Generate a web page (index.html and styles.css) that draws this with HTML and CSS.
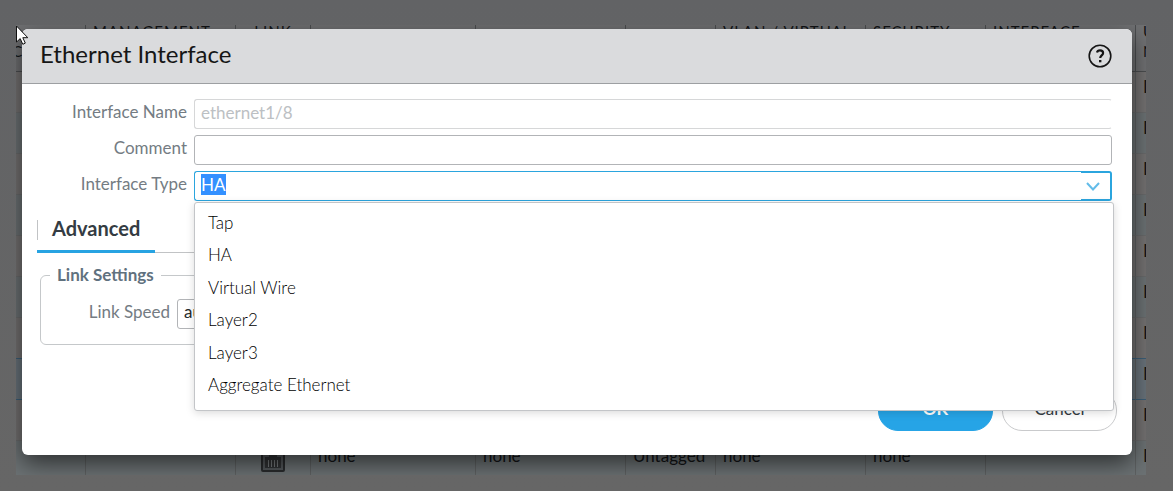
FILE: index.html
```html
<!DOCTYPE html>
<html lang="en">
<head>
<meta charset="utf-8">
<title>Ethernet Interface</title>
<link rel="stylesheet" href="styles.css">
</head>
<body>
<main class="workspace">
  <div class="backdrop" aria-hidden="true">
    <table class="grid">
      <colgroup>
        <col class="c-name"><col class="c-wide"><col class="c-link"><col class="c-ip"><col class="c-wide"><col class="c-tag"><col class="c-wide"><col class="c-zone"><col class="c-wide"><col class="c-wide">
      </colgroup>
      <thead>
        <tr><th class="end">INTERFACE</th><th>MANAGEMENT<br>PROFILE</th><th class="mid">LINK<br>STATE</th><th></th><th></th><th></th><th>VLAN / VIRTUAL<br>WIRE</th><th>SECURITY<br>ZONE</th><th>INTERFACE<br>TYPE</th><th>UPSTREAM<br>NAT</th></tr>
      </thead>
      <tbody>
        <tr><td></td><td></td><td></td><td></td><td></td><td></td><td></td><td></td><td></td><td>Disabled</td></tr>
        <tr><td></td><td></td><td></td><td></td><td></td><td></td><td></td><td></td><td></td><td>Disabled</td></tr>
        <tr><td></td><td></td><td></td><td></td><td></td><td></td><td></td><td></td><td></td><td>Disabled</td></tr>
        <tr><td></td><td></td><td></td><td></td><td></td><td></td><td></td><td></td><td></td><td>Disabled</td></tr>
        <tr><td></td><td></td><td></td><td></td><td></td><td></td><td></td><td></td><td></td><td>Disabled</td></tr>
        <tr><td></td><td></td><td></td><td></td><td></td><td></td><td></td><td></td><td></td><td>Disabled</td></tr>
        <tr><td></td><td></td><td></td><td></td><td></td><td></td><td></td><td></td><td></td><td>Disabled</td></tr>
        <tr class="selected"><td></td><td></td><td></td><td></td><td></td><td></td><td></td><td></td><td></td><td>Disabled</td></tr>
        <tr><td></td><td></td><td></td><td></td><td></td><td></td><td></td><td></td><td></td><td>Disabled</td></tr>
        <tr><td></td><td></td><td class="mid"><svg class="port" viewBox="0 0 24 24"><rect x="1" y="1" width="22" height="22" rx="1" fill="#53575a" stroke="#292b2d" stroke-width="2"/><path d="M4 20V9h4V6h8v3h4v11z" fill="#303234"/><path d="M7.500 12v7M10.500 12v7M13.500 12v7M16.500 12v7" stroke="#74787a" stroke-width="1"/></svg></td><td>none</td><td>none</td><td>Untagged</td><td>none</td><td>none</td><td></td><td>Disabled</td></tr>
      </tbody>
    </table>
  </div>

  <section class="dialog" role="dialog" aria-labelledby="dialog-title">
    <header class="dialog-header">
      <h1 id="dialog-title" class="dialog-title">Ethernet Interface</h1>
      <button class="help" type="button" aria-label="Help">
        <svg viewBox="0 0 24 24" width="24" height="24" fill="none" stroke="#151515"><circle cx="12" cy="12" r="10.800" stroke-width="1.600"/><path d="M9 8.500C9.300 7.100 10.600 6.300 12 6.300c1.800 0 3.100 1 3.100 2.600 0 2.400-2.900 2.500-2.900 5.100" stroke-width="2.200"/><path d="M12.200 16v2.300" stroke-width="2.400"/></svg>
      </button>
    </header>
    <form class="dialog-body">
      <div class="fields">
        <label for="if-name">Interface Name</label>
        <input id="if-name" class="field field-off" type="text" value="ethernet1/8" disabled>
        <label for="if-comment">Comment</label>
        <input id="if-comment" class="field" type="text">
        <label for="if-type">Interface Type</label>
        <div class="combo">
          <input id="if-type" class="field combo-input" type="text" value="HA" role="combobox" aria-expanded="true" aria-controls="type-list">
          <button class="combo-trigger" type="button" aria-label="Show types"><svg viewBox="0 0 14 9" width="14" height="9" fill="none" stroke="#63bce9" stroke-width="2"><path d="M1 1l6 6.500L13 1"/></svg></button>
          <ul id="type-list" class="options" role="listbox">
            <li role="option">Tap</li>
            <li role="option" aria-selected="true">HA</li>
            <li role="option">Virtual Wire</li>
            <li role="option">Layer2</li>
            <li role="option">Layer3</li>
            <li role="option">Aggregate Ethernet</li>
          </ul>
        </div>
      </div>
      <div class="tabs" role="tablist"><button class="tab" type="button" role="tab" aria-selected="true">Advanced</button></div>
      <fieldset class="link-settings">
        <legend>Link Settings</legend>
        <div class="link-row">
          <label for="link-speed">Link Speed</label>
          <select id="link-speed" class="field speed"><option>auto</option></select>
        </div>
      </fieldset>
      <footer class="actions">
        <button class="btn btn-primary" type="button">OK</button>
        <button class="btn" type="button">Cancel</button>
      </footer>
    </form>
  </section>
  <svg class="pointer" viewBox="0 0 12 20" width="12" height="20"><path d="M.500 1v16l3.700-3.400 2.600 5.700 2.500-1.200-2.500-5.400h5z" fill="#fff" stroke="#111" stroke-width="1"/></svg>
</main>
<script src="script.js"></script>
</body>
</html>
```
FILE: styles.css
```css
* { box-sizing: border-box; }

body {
  margin: 0;
  min-height: 100vh;
  background: linear-gradient(#626365, #666666);
  font-family: Lato, "Liberation Sans", sans-serif;
  font-size: 17px;
  line-height: 1.2;
  color: #25282b;
}

button, input, select { font: inherit; color: inherit; }

.workspace {
  position: relative;
  overflow: hidden;
  margin: 25px 27px 0 16px;
  padding: 4px 14px 20px 6px;
}

.backdrop {
  position: absolute;
  inset: 0;
  overflow: hidden;
  background: #747272;
}

.grid {
  width: 1357px;
  margin: -6px 0 0 -87px;
  table-layout: fixed;
  border-collapse: separate;
  border-spacing: 0;
  color: #121416;
}
.c-name { width: 157px; }
.c-wide { width: 150px; }
.c-link { width: 75px; }
.c-ip { width: 165px; }
.c-tag { width: 90px; }
.c-zone { width: 120px; }

.grid th {
  height: 53px;
  padding: 0 7px 10px;
  background: #707173;
  border-right: 1px solid #4c4e50;
  border-bottom: 1px solid #4c4e50;
  font-size: 15px;
  font-weight: 400;
  line-height: 20px;
  letter-spacing: 1px;
  text-align: left;
  vertical-align: bottom;
  white-space: nowrap;
}
.grid td {
  height: 41px;
  padding: 5px 7px;
  border-right: 1px solid #5e6162;
  border-bottom: 1px solid #6a6b6c;
  line-height: 20px;
  vertical-align: top;
}
.grid .mid { text-align: center; }
.grid .end { padding-right: 52px; text-align: right; }
.grid tbody tr:nth-child(even) { background: #6c7274; }
.grid .selected td { background: #69737b; border-bottom-color: #3c5f78; box-shadow: 0 -1px #3c5f78; }
.port { display: block; width: 24px; height: 24px; margin: 2px auto 0; }

.dialog {
  position: relative;
  background: #fff;
  border-radius: 6px;
  box-shadow: 0 8px 24px rgba(0, 0, 0, .6);
}
.dialog-header {
  display: flex;
  align-items: center;
  justify-content: space-between;
  height: 55px;
  padding: 0 20px 0 18px;
  background: #dadbdd;
  border-bottom: 1px solid #9d9fa2;
  border-radius: 6px 6px 0 0;
}
.dialog-title { margin: 0; padding-bottom: 3px; font-size: 24px; font-weight: 400; color: #161616; }
.help { display: flex; padding: 0; border: 0; background: none; }

.dialog-body { padding: 15px 20px 24px 15px; }
.fields {
  display: grid;
  grid-template-columns: 150px 1fr;
  gap: 6px 7px;
}
label { line-height: 26px; text-align: right; color: #747c83; }

.field {
  width: 100%;
  height: 30px;
  padding: 0 6px 4px;
  border: 1px solid #b2b4b7;
  border-radius: 3px;
  background: #fff;
  outline: 0;
}
.field-off { border-color: #d6d7d8; border-right-color: transparent; color: #bcc0c3; }

.combo { position: relative; display: flex; }
.combo-input { flex: 1; border-color: #2ba5de; border-right: 0; border-radius: 3px 0 0 3px; caret-color: transparent; }
.combo-input::selection { background: #3390ff; color: #fff; }
.combo-trigger {
  display: flex;
  align-items: center;
  justify-content: center;
  width: 31px;
  padding: 0 6px 0 0;
  border: 2px solid #2ba5de;
  border-left: 0;
  border-radius: 0 3px 3px 0;
  background: #fff;
}
.options {
  position: absolute;
  z-index: 2;
  top: 31px;
  left: 0;
  right: -2px;
  margin: 0;
  padding: 4px 0 9px;
  list-style: none;
  background: #fff;
  border: 1px solid #c3c5c8;
  border-radius: 3px;
  box-shadow: 0 2px 8px rgba(0, 0, 0, .15);
  font-weight: 300;
  color: #000;
}
.options li { padding: 6px 13px; }

.tabs { display: flex; margin-top: 17px; border-bottom: 1px solid #c1c3c5; }
.tab {
  height: 35px;
  margin-bottom: -1px;
  padding: 0 15px 12px;
  border: 0;
  border-bottom: 3px solid #27a3e2;
  background: linear-gradient(#c1c3c5, #c1c3c5) 0 2px / 1px 20px no-repeat;
  font-size: 20px;
  font-weight: 700;
  line-height: 20px;
  color: #343c43;
}

.link-settings {
  margin: 12px 0 0 3px;
  padding: 14px 16px 15px 0;
  border: 1px solid #c5c8ca;
  border-radius: 6px;
}
.link-settings legend { margin-left: 9px; padding: 0 7px; font-weight: 700; line-height: 20px; color: #5f717e; }
.link-row { display: grid; grid-template-columns: 129px 240px; gap: 7px; }
.speed { appearance: none; }

.actions { display: flex; justify-content: flex-end; gap: 9px; margin: 45px -5px 0 0; }
.btn {
  width: 115px;
  height: 41px;
  padding: 0 0 3px;
  border: 1px solid #c9cacc;
  border-radius: 20px;
  background: #fff;
  color: #343c43;
}
.btn-primary { border-color: #26a4e6; background: #26a4e6; color: #fff; font-weight: 700; }

.pointer { position: absolute; top: 0; left: 0; }
```
FILE: script.js
```js
const typeInput = document.getElementById("if-type");
typeInput.focus();
typeInput.select();
```
